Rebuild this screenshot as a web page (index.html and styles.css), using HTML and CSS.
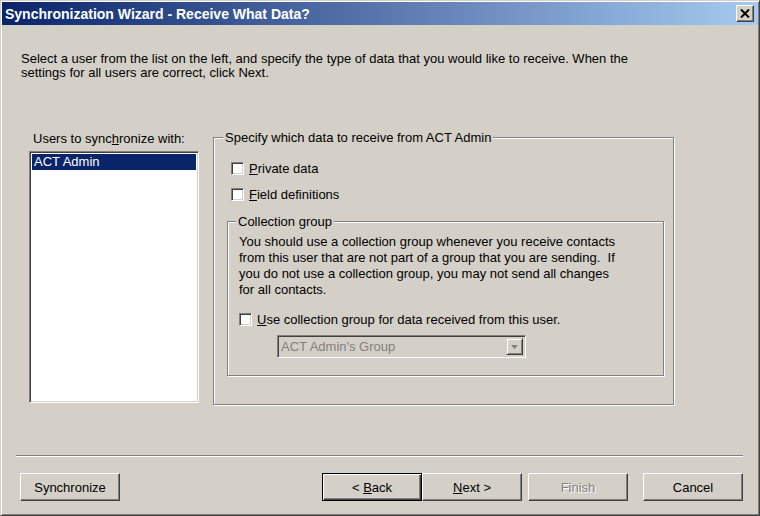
FILE: index.html
```html
<!DOCTYPE html>
<html lang="en">
<head>
    <meta charset="UTF-8">
    <title>Synchronization Wizard - Receive What Data?</title>
    <link rel="stylesheet" href="styles.css">
</head>
<body>
    <div class="window">
        <div class="titlebar">
            <span class="title">Synchronization Wizard - Receive What Data?</span>
            <span class="close-btn">
                <svg width="10" height="9" viewBox="0 0 10 9">
                    <path d="M1 0.5 L9 8.5 M9 0.5 L1 8.5" stroke="#000" stroke-width="2" fill="none"/>
                </svg>
            </span>
        </div>

        <div class="content">
            <p class="intro">Select a user from the list on the left, and specify the type of data that you would like to receive. When the<br>settings for all users are correct, click Next.</p>

            <div class="main">
                <!-- users list -->
                <div class="users">
                    <div class="users-label">Users to sync<u>h</u>ronize with:</div>
                    <div class="listbox">
                        <div class="list-item selected">ACT Admin</div>
                    </div>
                </div>

                <fieldset class="group data-group">
                    <legend>Specify which data to receive from ACT Admin</legend>
                    <label class="check first"><span class="box"></span><span><u>P</u>rivate data</span></label>
                    <label class="check"><span class="box"></span><span><u>F</u>ield definitions</span></label>

                    <fieldset class="group collection-group">
                        <legend>Collection group</legend>
                        <p class="note">You should use a collection group whenever you receive contacts<br>from this user that are not part of a group that you are sending.&nbsp; If<br>you do not use a collection group, you may not send all changes<br>for all contacts.</p>
                        <label class="check use-group"><span class="box"></span><span><u>U</u>se collection group for data received from this user.</span></label>
                        <div class="combo">
                            <span class="combo-text">ACT Admin's Group</span>
                            <span class="combo-arrow">
                                <svg width="7" height="4" viewBox="0 0 7 4"><path d="M0 0 H7 L3.5 4 Z" fill="#808080"/></svg>
                            </span>
                        </div>
                    </fieldset>
                </fieldset>
            </div>

            <div class="separator"></div>

            <div class="buttons">
                <button class="btn">Synchronize</button>
                <div class="nav-buttons">
                    <button class="btn default">&lt; <u>B</u>ack</button>
                    <button class="btn"><u>N</u>ext &gt;</button>
                    <button class="btn disabled finish">Finish</button>
                    <button class="btn cancel">Cancel</button>
                </div>
            </div>
        </div>
    </div>
</body>
</html>
```

FILE: styles.css
```css
body {
    margin: 0;
    padding: 0;
    font-family: "Liberation Sans", Arial, sans-serif;
    font-size: 13px;
    color: #000;
    background: #d4d0c8;
}
.window {
    width: 760px;
    height: 516px;
    box-sizing: border-box;
    border: 1px solid;
    border-color: #d4d0c8 #404040 #404040 #d4d0c8;
    box-shadow: inset 1px 1px #fff, inset -1px -1px #808080;
    padding: 1px;
    background: #d4d0c8;
}
.titlebar {
    height: 23px;
    display: flex;
    align-items: center;
    justify-content: space-between;
    padding: 0 4px 0 3px;
    background: linear-gradient(to right, #0a246a, #a6caf0);
}
.title {
    color: #fff;
    font-weight: bold;
    font-size: 14px;
}
.close-btn {
    width: 18px;
    height: 17px;
    box-sizing: border-box;
    display: flex;
    align-items: center;
    justify-content: center;
    background: #d4d0c8;
    border: 1px solid;
    border-color: #fff #404040 #404040 #fff;
    box-shadow: inset -1px -1px #808080;
}
.content {
    padding: 27px 15px 0 14px;
}
.intro {
    margin: 0 0 0 5px;
    line-height: 14px;
}
.main {
    display: flex;
    margin: 50px 0 0 13px;
}
.users {
    width: 170px;
}
.users-label {
    margin-top: 1px;
    padding-left: 4px;
    line-height: 15px;
}
.listbox {
    margin-top: 5px;
    height: 252px;
    box-sizing: border-box;
    background: #fff;
    border: 1px solid;
    border-color: #808080 #fff #fff #808080;
    box-shadow: inset 1px 1px #404040, inset -1px -1px #d4d0c8;
    padding: 2px;
}
.list-item {
    height: 16px;
    line-height: 16px;
    padding-left: 2px;
}
.list-item.selected {
    background: #0a246a;
    color: #fff;
}
.group {
    margin: 0;
    padding: 0;
    box-sizing: border-box;
    border: 1px solid #808080;
    box-shadow: 1px 1px #fff, inset 1px 1px #fff;
}
.group legend {
    padding: 0 2px;
    line-height: 15px;
    background: #d4d0c8;
}
.data-group {
    margin-left: 14px;
    width: 461px;
    height: 275px;
}
.data-group > legend {
    margin-left: 9px;
}
.check {
    display: flex;
    align-items: center;
    gap: 5px;
    height: 15px;
    line-height: 15px;
    margin: 11px 0 0 17px;
}
.check.first {
    margin-top: 16px;
}
.box {
    width: 13px;
    height: 13px;
    box-sizing: border-box;
    background: #fff;
    border: 1px solid;
    border-color: #808080 #fff #fff #808080;
    box-shadow: inset 1px 1px #404040, inset -1px -1px #d4d0c8;
}
.collection-group {
    margin: 12px 0 0 13px;
    width: 437px;
    height: 162px;
}
.collection-group > legend {
    margin-left: 8px;
}
.note {
    margin: 5px 0 0 11px;
    line-height: 16px;
}
.check.use-group {
    margin: 14px 0 0 11px;
}
.combo {
    display: flex;
    justify-content: space-between;
    width: 249px;
    height: 23px;
    box-sizing: border-box;
    margin: 8px 0 0 49px;
    border: 1px solid;
    border-color: #808080 #fff #fff #808080;
    box-shadow: inset 1px 1px #404040, inset -1px -1px #d4d0c8;
    padding: 2px;
}
.combo-text {
    color: #808080;
    line-height: 17px;
    padding-left: 1px;
}
.combo-arrow {
    width: 17px;
    box-sizing: border-box;
    display: flex;
    align-items: center;
    justify-content: center;
    border: 1px solid;
    border-color: #d4d0c8 #404040 #404040 #d4d0c8;
    box-shadow: inset 1px 1px #fff, inset -1px -1px #808080;
}
.separator {
    margin-top: 50px;
    border-top: 1px solid #808080;
    border-bottom: 1px solid #fff;
}
.buttons {
    display: flex;
    justify-content: space-between;
    margin-top: 16px;
}
.nav-buttons {
    display: flex;
}
.btn {
    width: 100px;
    height: 28px;
    margin: 0;
    padding: 0;
    font-family: "Liberation Sans", Arial, sans-serif;
    font-size: 13px;
    color: #000;
    background: #d4d0c8;
    border: 1px solid;
    border-color: #fff #404040 #404040 #fff;
    box-shadow: inset -1px -1px #808080;
    border-radius: 0;
}
.buttons > .btn {
    margin-left: 4px;
}
.btn.default {
    border-color: #000;
    box-shadow: inset 1px 1px #fff, inset -1px -1px #404040, inset -2px -2px #808080;
}
.btn.disabled {
    color: #808080;
    text-shadow: 1px 1px #fff;
}
.btn.finish {
    margin-left: 6px;
}
.btn.cancel {
    margin-left: 15px;
}
```
